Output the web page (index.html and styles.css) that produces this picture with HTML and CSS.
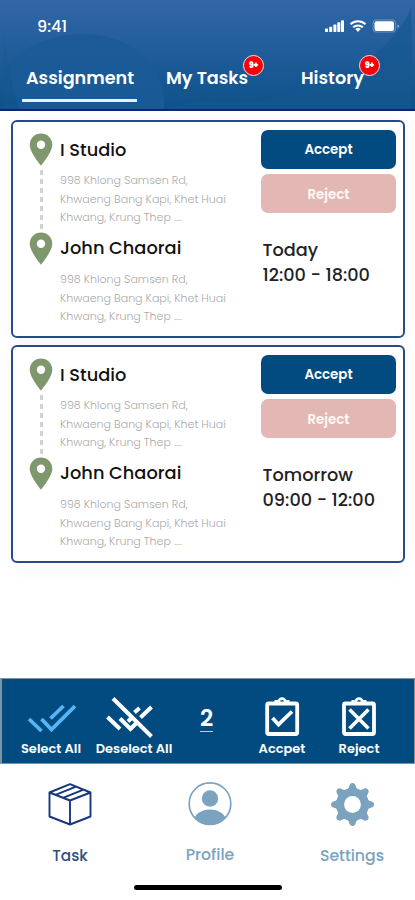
FILE: index.html
```html
<!DOCTYPE html>
<html lang="en">
<head>
<meta charset="utf-8">
<meta name="viewport" content="width=device-width, initial-scale=1">
<title>Assignments</title>
<link rel="stylesheet" href="styles.css">
</head>
<body>
<svg width="0" height="0" class="defs">
  <symbol id="pin" viewBox="0 0 24 34"><path fill="#7f976d" fill-rule="evenodd" d="M12 .5A11.3 11.3 0 0 0 .7 11.8C.7 19.5 12 32.7 12 32.7S23.300 19.500 23.300 11.800A11.300 11.300 0 0 0 12 .5ZM12 7.500a4.200 4.200 0 1 1 0 8.400a4.200 4.200 0 1 1 0-8.400Z"/></symbol>
</svg>
<div class="screen">
  <header class="header">
    <svg class="backdrop" width="415" height="111" viewBox="0 0 415 111">
      <path fill="#1b5b96" fill-opacity=".85" d="M6 64C25 44 54 34 84 35c34 1 62 17 75 47 4 10 5 20 4 29H16C10 96 6 80 6 64Z"/>
      <path fill="#16588f" fill-opacity=".65" d="M415 8C398 50 340 94 255 103c-20 2-38 2-55-1l-37 9H415Z"/>
      <path fill="#16588f" fill-opacity=".35" d="M0 30C3 65 8 90 17 111H0Z"/>
    </svg>
    <div class="status">
      <span class="clock">9:41</span>
      <svg class="signals" width="76" height="16" viewBox="0 0 76 16">
        <g fill="#fff">
          <rect x="0" y="9.500" width="3" height="3.500" rx=".7"/><rect x="4.200" y="7.800" width="3" height="5.200" rx=".7"/><rect x="8.400" y="5.500" width="3" height="7.500" rx=".7"/><rect x="12.300" y="3.200" width="3" height="9.800" rx=".7"/><rect x="16" y="1.200" width="3" height="11.800" rx=".7"/>
          <path d="M33 13l-2.700-2.900a4 4 0 0 1 5.400 0Z"/>
          <rect x="49.500" y="2.300" width="19.500" height="9.600" rx="2"/><path d="M72.500 5.500v3.500q1.500-.8 1.500-1.750T72.500 5.500Z" opacity=".5"/>
        </g>
        <g fill="none" stroke="#fff" stroke-width="2"><path d="M25.500 5.200a11 11 0 0 1 15 0M28.200 8.300a7 7 0 0 1 9.600 0"/></g>
        <rect x="48" y="1" width="22.500" height="12" rx="3" fill="none" stroke="#fff" stroke-opacity=".3"/>
      </svg>
    </div>
    <nav class="tabs">
      <a class="tab tab-assignment active"><span>Assignment</span></a>
      <a class="tab tab-tasks"><span>My Tasks</span><b class="badge">9+</b></a>
      <a class="tab tab-history"><span>History</span><b class="badge">9+</b></a>
    </nav>
  </header>

  <main class="list">
    <article class="card">
      <div class="route">
        <section class="stop from"><svg class="pin"><use href="#pin"/></svg><div><h2>I Studio</h2>
          <p class="address"><span>998 Khlong Samsen Rd,</span><span>Khwaeng Bang Kapi, Khet Huai</span><span>Khwang, Krung Thep ....</span></p></div></section>
        <section class="stop"><svg class="pin"><use href="#pin"/></svg><div><h2>John Chaorai</h2>
          <p class="address"><span>998 Khlong Samsen Rd,</span><span>Khwaeng Bang Kapi, Khet Huai</span><span>Khwang, Krung Thep ....</span></p></div></section>
      </div>
      <div class="side">
        <button class="btn accept">Accept</button>
        <button class="btn reject">Reject</button>
        <div class="when"><span>Today</span><span>12:00 - 18:00</span></div>
      </div>
    </article>
    <article class="card">
      <div class="route">
        <section class="stop from"><svg class="pin"><use href="#pin"/></svg><div><h2>I Studio</h2>
          <p class="address"><span>998 Khlong Samsen Rd,</span><span>Khwaeng Bang Kapi, Khet Huai</span><span>Khwang, Krung Thep ....</span></p></div></section>
        <section class="stop"><svg class="pin"><use href="#pin"/></svg><div><h2>John Chaorai</h2>
          <p class="address"><span>998 Khlong Samsen Rd,</span><span>Khwaeng Bang Kapi, Khet Huai</span><span>Khwang, Krung Thep ....</span></p></div></section>
      </div>
      <div class="side">
        <button class="btn accept">Accept</button>
        <button class="btn reject">Reject</button>
        <div class="when"><span>Tomorrow</span><span>09:00 - 12:00</span></div>
      </div>
    </article>
  </main>

  <div class="actions">
    <div class="action select"><svg width="50" height="44" viewBox="0 0 50 44" fill="none" stroke="#55b5f5" stroke-width="3.800"><path d="M3 25L15.500 37M15.500 25L25.500 35.500L49 12M24.500 24.500L37.500 12"/></svg><span>Select All</span></div>
    <div class="action deselect"><svg width="50" height="44" viewBox="0 0 50 44" fill="none" stroke="#fff" stroke-width="4"><path d="M3.500 23L16 35M16 24.500L26.500 35L33 28.500M9 4.500L47.500 42.500M24 27.500L28 23.500M30.500 18.500L35.500 14M36.500 23.500L47.500 13"/></svg><span>Deselect All</span></div>
    <div class="count"><span>2</span></div>
    <div class="action confirm"><svg width="36" height="44" viewBox="0 0 36 44" fill="none" stroke="#fff"><rect x="3.200" y="9.500" width="30" height="30.500" rx="1.500" stroke-width="3.800"/><path stroke-width="2.800" d="M10.500 7.500h4.300a3.200 2.800 0 0 1 6.400 0h4.300"/><path stroke-width="3.800" d="M8.500 24l6 6.500L28 17.500"/></svg><span>Accpet</span></div>
    <div class="action decline"><svg width="36" height="44" viewBox="0 0 36 44" fill="none" stroke="#fff"><rect x="3" y="9.500" width="30" height="30.500" rx="1.500" stroke-width="3.800"/><path stroke-width="2.800" d="M10.500 7.500h4.300a3.200 2.800 0 0 1 6.400 0h4.300"/><path stroke-width="3.600" d="M8.500 15.500l19 19M27.500 15.500l-19 19"/></svg><span>Reject</span></div>
  </div>

  <nav class="bottom">
    <a class="dest task"><svg width="46" height="46" viewBox="0 0 46 46" fill="none" stroke="#17377f" stroke-width="1.900" stroke-linejoin="round"><path d="M23 3.200L43.500 11.500V35.500L23 43.500L2.500 35.500V11.500ZM2.500 11.500L23 19.500L43.500 11.500M23 19.500V43.500M8.500 13.800L29 5.600M16 16.800L36.500 8.700"/></svg><span>Task</span></a>
    <a class="dest profile"><svg width="46" height="46" viewBox="0 0 46 46"><defs><clipPath id="round"><circle cx="23" cy="23" r="20.500"/></clipPath></defs><circle cx="23" cy="22.700" r="20.800" fill="none" stroke="#7ba2bf" stroke-width="1.700"/><circle cx="23" cy="17.500" r="8.200" fill="#7ba2bf"/><ellipse cx="23" cy="40" rx="16" ry="11.500" fill="#7ba2bf" clip-path="url(#round)"/></svg><span>Profile</span></a>
    <a class="dest settings"><svg width="46" height="46" viewBox="0 0 46 46"><g fill="#7ba2bf"><circle cx="23.500" cy="23.500" r="16.500"/><g id="teeth"><path id="tooth" d="M16 9.500Q19.800 8.500 20.200 5Q21 2 23.500 2T26.800 5Q27.200 8.500 31 9.500L28.500 14.500H18.500Z"/><use href="#tooth" transform="rotate(45 23.500 23.500)"/><use href="#tooth" transform="rotate(90 23.500 23.500)"/><use href="#tooth" transform="rotate(135 23.500 23.500)"/></g><use href="#teeth" transform="rotate(180 23.500 23.500)"/></g><circle cx="23.500" cy="23.500" r="8.400" fill="#fff"/></svg><span>Settings</span></a>
  </nav>
  <div class="home"></div>
</div>
</body>
</html>
```
FILE: styles.css
```css
* { box-sizing: border-box; }
body { margin: 0; background: #fff; font-family: Poppins, Inter, sans-serif; }
.defs { display: block; }
.screen { width: 415px; height: 900px; overflow: hidden; display: flex; flex-direction: column; background: #fff; }
h2, p { margin: 0; }
span { white-space: nowrap; }

.header { position: relative; height: 111px; flex: none; color: #fff; background: linear-gradient(#3266a7, #0d528b); border-bottom: 2px solid #08277c; }
.backdrop { position: absolute; inset: 0; height: 109px; }
.status { position: relative; height: 54px; display: flex; justify-content: space-between; padding: 17px 14px 0 37px; }
.clock { font-size: 16px; line-height: 20px; font-weight: 500; }
.signals { margin-top: 2px; }
.tabs { position: relative; display: flex; height: 50px; padding-left: 22px; }
.tab { position: relative; height: 48px; padding-top: 13px; font-size: 17.600px; line-height: 22px; font-weight: 600; }
.tab-assignment { width: 115px; padding-left: 4px; }
.tab-tasks { width: 83px; margin-left: 29px; }
.tab-history { width: 64px; margin-left: 52px; }
.active { border-bottom: 3px solid #e8edff; }
.badge { position: absolute; top: 1px; right: -15px; width: 21px; height: 21px; border: 1px solid #ffd9df; border-radius: 50%; background: #fb0007; font-size: 8px; line-height: 19px; text-align: center; }

.list { height: 567px; flex: none; padding: 9px 10px 0 11px; display: flex; flex-direction: column; gap: 7px; }
.card { height: 218px; border: 2px solid #284a87; border-radius: 6px; background: #fff; display: flex; justify-content: space-between; padding: 8px 7px 0 16px; box-shadow: 0 5px 24px #28408009; }
.stop { position: relative; display: flex; gap: 7px; height: 99px; padding-top: 3px; }
.pin { width: 24px; height: 34px; flex: none; }
.from::after { content: ""; position: absolute; left: 10.500px; top: 36px; width: 3px; height: 63px; background: repeating-linear-gradient(transparent 0 4px, #d2d2d2 4px 9px); }
h2 { font-size: 17.800px; line-height: 24px; margin-top: 4px; font-weight: 500; color: #111; }
.from h2 { margin: 5px 0 -1px; }
.address { margin-top: 10px; display: flex; flex-direction: column; align-items: flex-start; font-size: 11.050px; line-height: 18.600px; font-weight: 300; color: #aaa; }
.side { width: 135px; display: flex; flex-direction: column; }
.btn { border: 0; border-radius: 7px; height: 38.500px; flex: none; padding: 2px 0 0; font: 600 13.400px Poppins, Inter, sans-serif; color: #fff; }
.accept { background: #024b81; }
.reject { background: #e3b8b4; margin-top: 5.500px; padding-top: 3px; color: #fff8f7; }
.when { display: flex; flex-direction: column; align-items: flex-start; margin-top: 24px; padding-left: 1.500px; font-size: 17.700px; line-height: 25px; font-weight: 500; color: #222; }

.actions { height: 86px; flex: none; background: #024b81; border: solid #7994a5; border-width: 1px 1px 1px 2px; color: #fff; display: flex; padding-top: 15px; }
.action { display: flex; flex-direction: column; align-items: center; font-size: 13px; line-height: 16px; font-weight: 600; }
.action span { margin-top: 3px; }
.select { width: 66px; margin-left: 16px; }
.deselect { width: 82px; margin-left: 9px; }
.deselect svg { margin-right: 10px; }
.count { width: 13px; margin-left: 25px; padding-top: 13px; text-align: center; font-size: 23px; font-weight: 600; }
.count span { display: block; height: 25px; border-bottom: 1px solid #b9cee0; line-height: 23px; }
.confirm { width: 52px; margin-left: 43px; }
.decline { width: 46px; margin-left: 28px; }

.bottom { height: 120px; flex: none; display: flex; padding-top: 17px; }
.dest { display: flex; flex-direction: column; align-items: center; font-size: 15.700px; line-height: 22px; font-weight: 500; color: #7ba2bf; }
.dest span { margin-top: 17px; }
.task { width: 46px; margin-left: 47px; font-size: 15.300px; color: #304f82; }
.task span { margin-top: 18px; }
.profile { width: 52px; margin-left: 91px; }
.settings { width: 66px; margin-left: 83px; }
.settings span { margin-top: 18px; }
.home { width: 148px; height: 5px; margin: 1px 0 0 134px; border-radius: 3px; background: #000; }
```
